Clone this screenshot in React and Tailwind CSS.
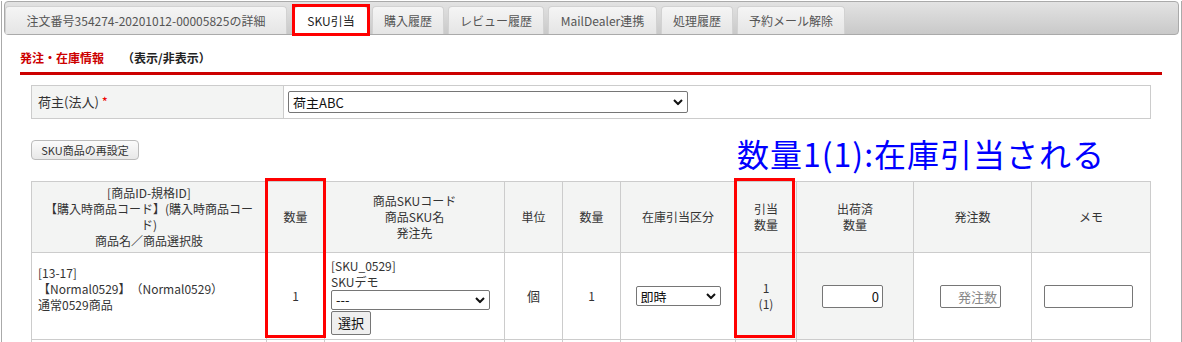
import { useState } from 'react';

const tabs = [
  { label: '注文番号354274-20201012-00005825の詳細', width: 'w-[282px]' },
  { label: 'SKU引当', width: 'w-[74px] ml-[3px]', active: true },
  { label: '購入履歴', width: 'w-[72px]' },
  { label: 'レビュー履歴', width: 'w-[96px]' },
  { label: 'MailDealer連携', width: 'w-[109px]' },
  { label: '処理履歴', width: 'w-[72px]' },
  { label: '予約メール解除', width: 'w-[108px]' },
];

function Chevron() {
  return (
    <svg width="10" height="7" viewBox="0 0 10 7" className="pointer-events-none absolute right-[5px] top-1/2 -translate-y-1/2">
      <path d="M1 1.5 L5 5.5 L9 1.5" fill="none" stroke="#111" strokeWidth="2" />
    </svg>
  );
}

function Select({ value, options, className }) {
  return (
    <div className={`relative ${className}`}>
      <select
        defaultValue={value}
        className="h-full w-full appearance-none rounded-[2px] border border-[#767676] bg-white pl-[4px] pr-[18px] text-[13px] leading-none text-[#111] outline-none"
      >
        {options.map(o => (
          <option key={o}>{o}</option>
        ))}
      </select>
      <Chevron />
    </div>
  );
}

function App() {
  const [memo, setMemo] = useState('');

  const th = 'border border-[#ccc] bg-[#f3f4f3] px-[6px] text-center align-middle font-normal';
  const td = 'border border-[#ccc] px-[6px] align-middle';
  const input = 'block h-[23px] rounded-[2px] border border-[#767676] bg-white px-[3px] text-[13px] text-[#111] outline-none';

  return (
    <div className="h-[342px] overflow-hidden bg-white font-['Noto_Sans_CJK_JP',sans-serif] text-[12px] text-[#333]">
      <div className="ml-[1px] min-h-[342px] w-[1181px] border-x border-[#aaa]">
        {/* Tabs */}
        <div className="mx-[2px] mt-[1px] flex h-[34px] items-end gap-[4px] rounded-[4px] border border-[#aaa] bg-linear-to-b from-[#e3e3e3] to-[#c9c9c9]">
          {tabs.map(t => (
            <div
              key={t.label}
              className={`relative flex h-[28px] items-center justify-center rounded-t-[4px] border border-b-0 text-[12px] ${t.width} ${
                t.active
                  ? 'border-[#ccc] bg-white text-[#222]'
                  : 'border-[#d2d2d2] bg-linear-to-b from-[#f5f5f5] to-[#e5e5e5] text-[#555]'
              }`}
            >
              {t.label}
              {t.active && (
                <div className="pointer-events-none absolute -left-[3px] -right-[3px] -top-[3px] -bottom-[2px] border-[3px] border-[#f00]" />
              )}
            </div>
          ))}
        </div>

        <div className="ml-[18px] mr-[19px]">
          {/* Section heading */}
          <div className="border-b-[3px] border-[#cc0000] pb-[6px] pt-[15px] text-[12px] font-bold leading-[16px]">
            <span className="text-[#cc0000]">発注・在庫情報</span>
            <span className="ml-[18px] text-[#222]">（表示/非表示）</span>
          </div>

          <div className="px-[11px]">
            {/* 荷主 */}
            <table className="mt-[10px] w-full table-fixed border-collapse">
              <tbody>
                <tr className="h-[33px]">
                  <td className={`${td} w-[252px] bg-[#f3f4f3] text-[13px]`}>
                    荷主(法人) <span className="text-[#e00]">*</span>
                  </td>
                  <td className="border border-[#ccc] pl-[4px] align-middle">
                    <Select value="荷主ABC" options={['荷主ABC', '荷主DEF']} className="h-[22px] w-[400px]" />
                  </td>
                </tr>
              </tbody>
            </table>

            {/* Reset button + note */}
            <div className="mt-[16px] flex items-start">
              <button className="mt-[5px] h-[20px] w-[108px] rounded-[4px] border border-[#bbb] bg-linear-to-b from-[#fbfbfb] to-[#e8e8e8] text-[11px] leading-none text-[#333]">
                SKU商品の再設定
              </button>
              <p className="ml-[598px] text-[32px] leading-[36px] tracking-[1px] text-[#0000ff]">数量1(1):在庫引当される</p>
            </div>

            {/* SKU table */}
            <div className="relative mt-[10px]">
              <table className="w-full table-fixed border-collapse leading-[16px]">
                <colgroup>
                  <col className="w-[235px]" />
                  <col className="w-[58px]" />
                  <col className="w-[180px]" />
                  <col className="w-[58px]" />
                  <col className="w-[58px]" />
                  <col className="w-[115px]" />
                  <col className="w-[61px]" />
                  <col className="w-[117px]" />
                  <col className="w-[118px]" />
                  <col />
                </colgroup>
                <thead>
                  <tr className="h-[71px]">
                    <th className={th}>
                      [商品ID-規格ID]
                      <br />
                      【購入時商品コード】(購入時商品コー
                      <br />
                      ド)
                      <br />
                      商品名／商品選択肢
                    </th>
                    <th className={th}>数量</th>
                    <th className={th}>
                      商品SKUコード
                      <br />
                      商品SKU名
                      <br />
                      発注先
                    </th>
                    <th className={th}>単位</th>
                    <th className={th}>数量</th>
                    <th className={th}>在庫引当区分</th>
                    <th className={th}>
                      引当
                      <br />
                      数量
                    </th>
                    <th className={th}>
                      出荷済
                      <br />
                      数量
                    </th>
                    <th className={th}>発注数</th>
                    <th className={th}>メモ</th>
                  </tr>
                </thead>
                <tbody>
                  <tr className="h-[87px]">
                    <td className={`${td} pb-[14px]`}>
                      [13-17]
                      <br />
                      【Normal0529】　（Normal0529）
                      <br />
                      通常0529商品
                    </td>
                    <td className={`${td} text-center`}>1</td>
                    <td className={td}>
                      [SKU_0529]
                      <br />
                      SKUデモ
                      <Select value="---" options={['---']} className="h-[20px] w-[159px]" />
                      <button className="mt-[1px] h-[24px] w-[40px] rounded-[2px] border border-[#767676] bg-[#efefef] text-[13px] leading-none text-[#111]">
                        選択
                      </button>
                    </td>
                    <td className={`${td} text-center text-[13px]`}>個</td>
                    <td className={`${td} text-center`}>1</td>
                    <td className={td}>
                      <Select value="即時" options={['即時', '予約']} className="mx-auto h-[20px] w-[85px]" />
                    </td>
                    <td className={`${td} bg-[#f3f4f3] text-center`}>
                      1
                      <br />
                      (1)
                    </td>
                    <td className={`${td} bg-[#f3f4f3]`}>
                      <input defaultValue="0" className={`${input} ml-[19px] w-[61px] text-right`} />
                    </td>
                    <td className={td}>
                      <input placeholder="発注数" className={`${input} ml-[20px] w-[61px] text-right placeholder:text-[#888]`} />
                    </td>
                    <td className={td}>
                      <input value={memo} onChange={e => setMemo(e.target.value)} className={`${input} ml-[6px] w-[89px]`} />
                    </td>
                  </tr>
                  <tr className="h-[40px]">
                    {Array.from({ length: 10 }).map((_, i) => (
                      <td key={i} className={td} />
                    ))}
                  </tr>
                </tbody>
              </table>

              {/* highlight boxes */}
              <div className="pointer-events-none absolute left-[234px] top-[-3px] h-[160px] w-[61px] border-[3px] border-[#f00]" />
              <div className="pointer-events-none absolute left-[703px] top-[-3px] h-[160px] w-[61px] border-[3px] border-[#f00]" />
            </div>
          </div>
        </div>
      </div>
    </div>
  );
}

export default App;
